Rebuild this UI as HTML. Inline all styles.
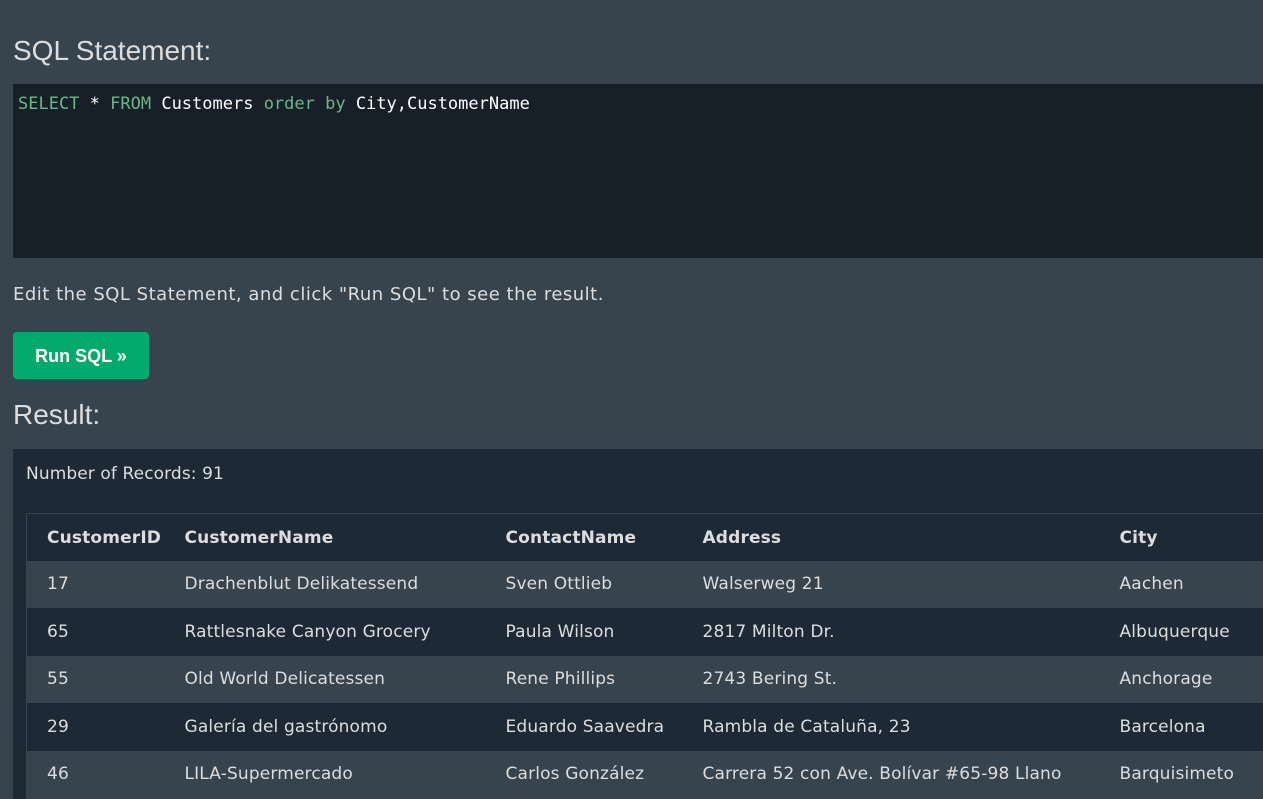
<!DOCTYPE html>
<html><head><style>
body{margin:0;background:#38444d;width:1263px;height:790px;overflow:hidden;font-family:Verdana,"DejaVu Sans",sans-serif;color:#ddd}
h2{position:absolute;margin:0;font-family:"Liberation Sans",sans-serif;font-weight:normal;font-size:28px;color:#ddd;left:13px}
.ed{position:absolute;left:13px;top:84px;width:1260px;height:174px;background:#172029;font-family:"DejaVu Sans Mono","Liberation Mono",monospace;font-size:17px;color:#fff}
.ed div{position:absolute;left:5px;top:10px;white-space:pre}
.k{color:#6db586}
.ins{position:absolute;left:13px;top:284px;font-size:18px;letter-spacing:0.5px;color:#ddd}
.btn{position:absolute;left:13px;top:332px;width:136px;height:47px;background:#04aa6d;border-radius:4px;color:#fff;font-family:"Liberation Sans",sans-serif;font-weight:bold;font-size:18px;line-height:48px;text-align:center}
.res{position:absolute;left:13px;top:449px;width:1260px;height:350px;background:#1d2a35}
.nr{position:absolute;left:13px;top:15px;font-size:17px;letter-spacing:0.1px;color:#ddd}
table{position:absolute;left:13px;top:64px;border-collapse:collapse;border:1px solid #38444d;width:1260px;font-size:17px;letter-spacing:0.15px;color:#ddd;table-layout:fixed}
td,th{height:47.5px;padding:0 0 0 20px;text-align:left;white-space:nowrap;box-sizing:border-box;overflow:hidden}
th{font-weight:bold;height:47px;padding-top:2px}
tr.a{background:#38444d}
</style></head><body>
<h2 style="top:35px">SQL Statement:</h2>
<div class="ed"><div><span class="k">SELECT</span> * <span class="k">FROM</span> Customers <span class="k">order by</span> City,CustomerName</div></div>
<div class="ins">Edit the SQL Statement, and click "Run SQL" to see the result.</div>
<div class="btn">Run SQL »</div>
<h2 style="top:399px">Result:</h2>
<div class="res"><div class="nr">Number of Records: 91</div>
<table>
<tr><th style="width:138px">CustomerID</th><th style="width:321px">CustomerName</th><th style="width:197px">ContactName</th><th style="width:417px">Address</th><th>City</th></tr>
<tr class="a"><td>17</td><td>Drachenblut Delikatessend</td><td>Sven Ottlieb</td><td>Walserweg 21</td><td>Aachen</td></tr>
<tr><td>65</td><td>Rattlesnake Canyon Grocery</td><td>Paula Wilson</td><td>2817 Milton Dr.</td><td>Albuquerque</td></tr>
<tr class="a"><td>55</td><td>Old World Delicatessen</td><td>Rene Phillips</td><td>2743 Bering St.</td><td>Anchorage</td></tr>
<tr><td>29</td><td>Galería del gastrónomo</td><td>Eduardo Saavedra</td><td>Rambla de Cataluña, 23</td><td>Barcelona</td></tr>
<tr class="a"><td>46</td><td>LILA-Supermercado</td><td>Carlos González</td><td>Carrera 52 con Ave. Bolívar #65-98 Llano</td><td>Barquisimeto</td></tr>
</table></div>
</body></html>
